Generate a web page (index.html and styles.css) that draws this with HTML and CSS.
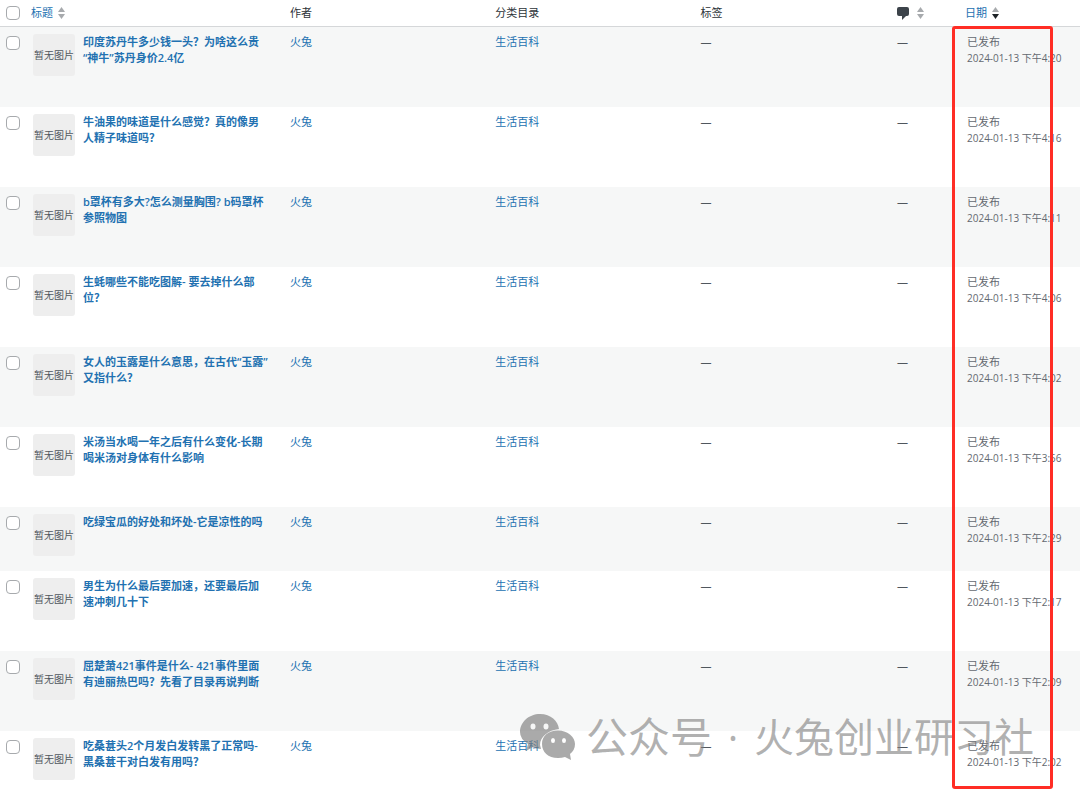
FILE: index.html
```html
<!DOCTYPE html>
<html lang="zh-CN">
<head>
<meta charset="utf-8">
<title>文章</title>
<link rel="stylesheet" href="styles.css">
</head>
<body>
<main class="screen">
<table class="posts">
<colgroup><col class="col-check"><col class="col-title"><col class="col-author"><col class="col-category"><col class="col-tags"><col class="col-comments"><col class="col-date"></colgroup>
<thead>
<tr>
<th class="check"><input type="checkbox" aria-label="全选"></th>
<th><a class="sort" href="#">标题<svg class="arrows" viewBox="0 0 7 12"><path class="off" d="M0 5 3.5 0 7 5z"/><path class="off" d="M0 7h7L3.5 12z"/></svg></a></th>
<th>作者</th>
<th>分类目录</th>
<th>标签</th>
<th><a class="sort" href="#" aria-label="评论"><svg class="bubble" viewBox="0 0 12 13"><path d="M2 0h8q2 0 2 2v5q0 2-2 2H9l-4 4V9H2Q0 9 0 7V2Q0 0 2 0z"/></svg><svg class="arrows wide" viewBox="0 0 7 12"><path class="off" d="M0 5 3.5 0 7 5z"/><path class="off" d="M0 7h7L3.5 12z"/></svg></a></th>
<th><a class="sort" href="#">日期<svg class="arrows" viewBox="0 0 7 12"><path class="off" d="M0 5 3.5 0 7 5z"/><path class="on" d="M0 7h7L3.5 12z"/></svg></a></th>
</tr>
</thead>
<tbody>
<tr><td class="check"><input type="checkbox" aria-label="选择文章"></td><td><div class="post"><span class="thumb">暂无图片</span><a class="title" href="#">印度苏丹牛多少钱一头？为啥这么贵<br>“神牛”苏丹身价2.4亿</a></div></td><td><a href="#">火兔</a></td><td><a href="#">生活百科</a></td><td>—</td><td>—</td><td class="date">已发布<time>2024-01-13 下午4:20</time></td></tr>
<tr><td class="check"><input type="checkbox" aria-label="选择文章"></td><td><div class="post"><span class="thumb">暂无图片</span><a class="title" href="#">牛油果的味道是什么感觉？真的像男<br>人精子味道吗？</a></div></td><td><a href="#">火兔</a></td><td><a href="#">生活百科</a></td><td>—</td><td>—</td><td class="date">已发布<time>2024-01-13 下午4:16</time></td></tr>
<tr><td class="check"><input type="checkbox" aria-label="选择文章"></td><td><div class="post"><span class="thumb">暂无图片</span><a class="title" href="#">b罩杯有多大?怎么测量胸围? b码罩杯<br>参照物图</a></div></td><td><a href="#">火兔</a></td><td><a href="#">生活百科</a></td><td>—</td><td>—</td><td class="date">已发布<time>2024-01-13 下午4:11</time></td></tr>
<tr><td class="check"><input type="checkbox" aria-label="选择文章"></td><td><div class="post"><span class="thumb">暂无图片</span><a class="title" href="#">生蚝哪些不能吃图解- 要去掉什么部<br>位？</a></div></td><td><a href="#">火兔</a></td><td><a href="#">生活百科</a></td><td>—</td><td>—</td><td class="date">已发布<time>2024-01-13 下午4:06</time></td></tr>
<tr><td class="check"><input type="checkbox" aria-label="选择文章"></td><td><div class="post"><span class="thumb">暂无图片</span><a class="title" href="#">女人的玉露是什么意思，在古代“玉露”<br>又指什么？</a></div></td><td><a href="#">火兔</a></td><td><a href="#">生活百科</a></td><td>—</td><td>—</td><td class="date">已发布<time>2024-01-13 下午4:02</time></td></tr>
<tr><td class="check"><input type="checkbox" aria-label="选择文章"></td><td><div class="post"><span class="thumb">暂无图片</span><a class="title" href="#">米汤当水喝一年之后有什么变化-长期<br>喝米汤对身体有什么影响</a></div></td><td><a href="#">火兔</a></td><td><a href="#">生活百科</a></td><td>—</td><td>—</td><td class="date">已发布<time>2024-01-13 下午3:56</time></td></tr>
<tr><td class="check"><input type="checkbox" aria-label="选择文章"></td><td><div class="post"><span class="thumb">暂无图片</span><a class="title" href="#">吃绿宝瓜的好处和坏处-它是凉性的吗</a></div></td><td><a href="#">火兔</a></td><td><a href="#">生活百科</a></td><td>—</td><td>—</td><td class="date">已发布<time>2024-01-13 下午2:29</time></td></tr>
<tr><td class="check"><input type="checkbox" aria-label="选择文章"></td><td><div class="post"><span class="thumb">暂无图片</span><a class="title" href="#">男生为什么最后要加速，还要最后加<br>速冲刺几十下</a></div></td><td><a href="#">火兔</a></td><td><a href="#">生活百科</a></td><td>—</td><td>—</td><td class="date">已发布<time>2024-01-13 下午2:17</time></td></tr>
<tr><td class="check"><input type="checkbox" aria-label="选择文章"></td><td><div class="post"><span class="thumb">暂无图片</span><a class="title" href="#">屈楚萧421事件是什么- 421事件里面<br>有迪丽热巴吗？先看了目录再说判断</a></div></td><td><a href="#">火兔</a></td><td><a href="#">生活百科</a></td><td>—</td><td>—</td><td class="date">已发布<time>2024-01-13 下午2:09</time></td></tr>
<tr><td class="check"><input type="checkbox" aria-label="选择文章"></td><td><div class="post"><span class="thumb">暂无图片</span><a class="title" href="#">吃桑葚头2个月发白发转黑了正常吗-<br>黑桑葚干对白发有用吗？</a></div></td><td><a href="#">火兔</a></td><td><a href="#">生活百科</a></td><td>—</td><td>—</td><td class="date">已发布<time>2024-01-13 下午2:02</time></td></tr>
</tbody>
</table>
<div class="watermark">
<svg class="wechat" viewBox="0 0 56 46"><path fill-rule="evenodd" d="M20 0C31 0 38 7 39 15C28 16 20 23 20 31L21 35Q16 35 13 33L6 37 8 30Q0 25 0 18C0 8 9 0 20 0zM13 9.500a2.500 3 0 1 0 0 6 2.500 3 0 1 0 0-6zM26 9.500a2.500 3 0 1 0 0 6 2.500 3 0 1 0 0-6z"/><path fill-rule="evenodd" d="M38 16.500C48 16.500 55 23 55 30Q55 36 50 40L51 46 45 43Q42 44 38 44C28 44 22 38 22 30S28 16.500 38 16.500zM33 24a2 2.500 0 1 0 0 5 2 2.500 0 1 0 0-5zM44 24a2 2.500 0 1 0 0 5 2 2.500 0 1 0 0-5z"/></svg>
<span class="account">公众号</span><span class="dot">·</span><span>火兔创业研习社</span>
</div>
<div class="highlight"></div>
</main>
</body>
</html>
```
FILE: styles.css
```css
body {
  margin: 0;
  background: #fff;
  color: #50575e;
  font: 11px/16px "Open Sans", "Noto Sans CJK SC", sans-serif;
}
.screen {
  position: relative;
  overflow: hidden;
}
.posts {
  width: 100%;
  table-layout: fixed;
  border-collapse: separate;
  border-spacing: 0;
}
.col-check { width: 25px; }
.col-author, .col-category { width: 19%; }
.col-tags { width: 18.2%; }
.col-comments { width: 70px; }
.col-date { width: 121px; }
th {
  height: 26px;
  padding: 0 0 0 8px;
  border-bottom: 1px solid #d5d7d9;
  text-align: left;
  font-weight: 400;
  color: #2c3338;
}
th:nth-child(2), th:last-child { padding-left: 6px; }
td {
  padding: 7px 0 0 8px;
  vertical-align: top;
}
tbody tr:nth-child(odd) { background: #f6f7f7; }
th.check, td.check { padding-left: 6px; }
a {
  color: #2271b1;
  text-decoration: none;
}
input {
  appearance: none;
  display: block;
  box-sizing: border-box;
  width: 14px;
  height: 14px;
  margin: 0;
  border: 1px solid #a7aaad;
  border-radius: 4px;
  background: #fff;
}
td input { margin-top: 2px; }
.sort {
  display: flex;
  align-items: center;
  gap: 5px;
}
.arrows { width: 7px; height: 12px; }
.wide { margin-left: 3px; }
.off { fill: #a7aaad; }
.on { fill: #1d2327; }
.bubble { width: 12px; height: 13px; fill: #3c434a; }
.post {
  display: flex;
  align-items: flex-start;
  gap: 8px;
}
.thumb {
  flex: none;
  width: 42px;
  height: 42px;
  border-radius: 3px;
  background: #eee;
  color: #50575e;
  font-size: 10px;
  line-height: 42px;
  text-align: center;
}
.title {
  padding-bottom: 41px;
  font-weight: 600;
  white-space: nowrap;
}
tbody tr:last-child .title { padding-bottom: 26px; }
.date {
  color: #646970;
  white-space: nowrap;
}
.date time {
  display: block;
  font-size: 10px;
}
.watermark {
  position: absolute;
  right: 46px;
  bottom: 30px;
  display: flex;
  align-items: center;
  color: rgba(125, 125, 125, 0.6);
  font-size: 40px;
  line-height: 58px;
}
.wechat {
  width: 56px;
  height: 46px;
  margin-right: 10px;
  fill: rgba(125, 125, 125, 0.65);
}
.account { font-size: 42px; }
.dot {
  width: 42px;
  text-align: center;
}
.highlight {
  position: absolute;
  top: 26px;
  right: 27px;
  bottom: 7px;
  box-sizing: border-box;
  width: 101px;
  border: 3px solid #ff2d25;
  border-radius: 3px;
}
```
